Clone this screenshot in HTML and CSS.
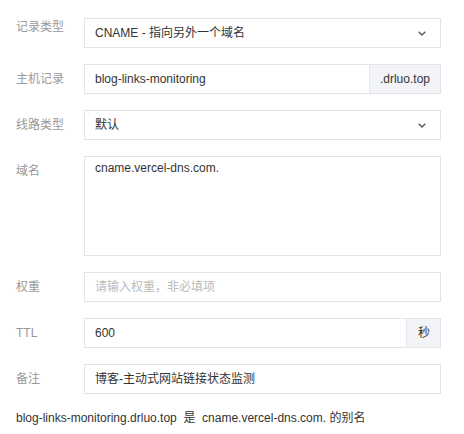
FILE: index.html
```html
<!DOCTYPE html>
<html lang="zh-CN">
<head>
<meta charset="utf-8">
<link rel="stylesheet" href="styles.css">
</head>
<body>
<div class="form">
  <div class="row">
    <div class="label label-first">记录类型</div>
    <div class="field select">
      <span class="value">CNAME - 指向另外一个域名</span>
      <svg class="chev" width="8" height="5" viewBox="0 0 8 5"><path d="M0.7 0.7 L4 4 L7.3 0.7" fill="none" stroke="#555" stroke-width="1.3"/></svg>
    </div>
  </div>
  <div class="row">
    <div class="label">主机记录</div>
    <div class="field group">
      <span class="value grow">blog-links-monitoring</span>
      <span class="addon">.drluo.top</span>
    </div>
  </div>
  <div class="row">
    <div class="label">线路类型</div>
    <div class="field select">
      <span class="value">默认</span>
      <svg class="chev" width="8" height="5" viewBox="0 0 8 5"><path d="M0.7 0.7 L4 4 L7.3 0.7" fill="none" stroke="#555" stroke-width="1.3"/></svg>
    </div>
  </div>
  <div class="row">
    <div class="label">域名</div>
    <div class="field area">cname.vercel-dns.com.</div>
  </div>
  <div class="row">
    <div class="label">权重</div>
    <div class="field"><span class="value placeholder">请输入权重，非必填项</span></div>
  </div>
  <div class="row">
    <div class="label">TTL</div>
    <div class="field group">
      <span class="value grow">600</span>
      <span class="addon addon-sm">秒</span>
    </div>
  </div>
  <div class="row">
    <div class="label">备注</div>
    <div class="field"><span class="value">博客-主动式网站链接状态监测</span></div>
  </div>
  <p class="note">blog-links-monitoring.drluo.top&nbsp;&nbsp;是&nbsp;&nbsp;cname.vercel-dns.com. 的别名</p>
</div>
</body>
</html>
```
FILE: styles.css
```css
html, body {
  margin: 0;
  padding: 0;
  background: #fff;
}
body {
  font-family: "Liberation Sans", Arial, "Noto Sans CJK SC", sans-serif;
  font-size: 12px;
  color: #333;
}
.form {
  padding: 18px 0 0 16px;
  width: 425px;
}
.row {
  display: flex;
  align-items: flex-start;
  margin-bottom: 16px;
}
.label {
  width: 68px;
  flex: none;
  line-height: 30px;
  color: #999;
}
.label-first {
  line-height: 18px;
}
.field {
  width: 358px;
  box-sizing: border-box;
  height: 30px;
  border: 1px solid #e3e4e8;
  display: flex;
  align-items: center;
  padding: 0 10px;
  line-height: 16px;
}
.select {
  justify-content: space-between;
  padding-right: 14px;
}
.chev {
  display: block;
}
.group {
  padding-right: 0;
}
.grow {
  flex: 1;
}
.addon {
  align-self: stretch;
  display: flex;
  align-items: center;
  padding: 0 10px;
  background: #f3f4f7;
  border-left: 1px solid #e8e9ed;
}
.addon-sm {
  padding: 0 10px 0 11px;
}
.area {
  height: 100px;
  align-items: flex-start;
  padding-top: 3px;
}
.placeholder {
  color: #bbb;
}
.note {
  margin: 0;
  line-height: 16px;
  color: #333;
}
```
